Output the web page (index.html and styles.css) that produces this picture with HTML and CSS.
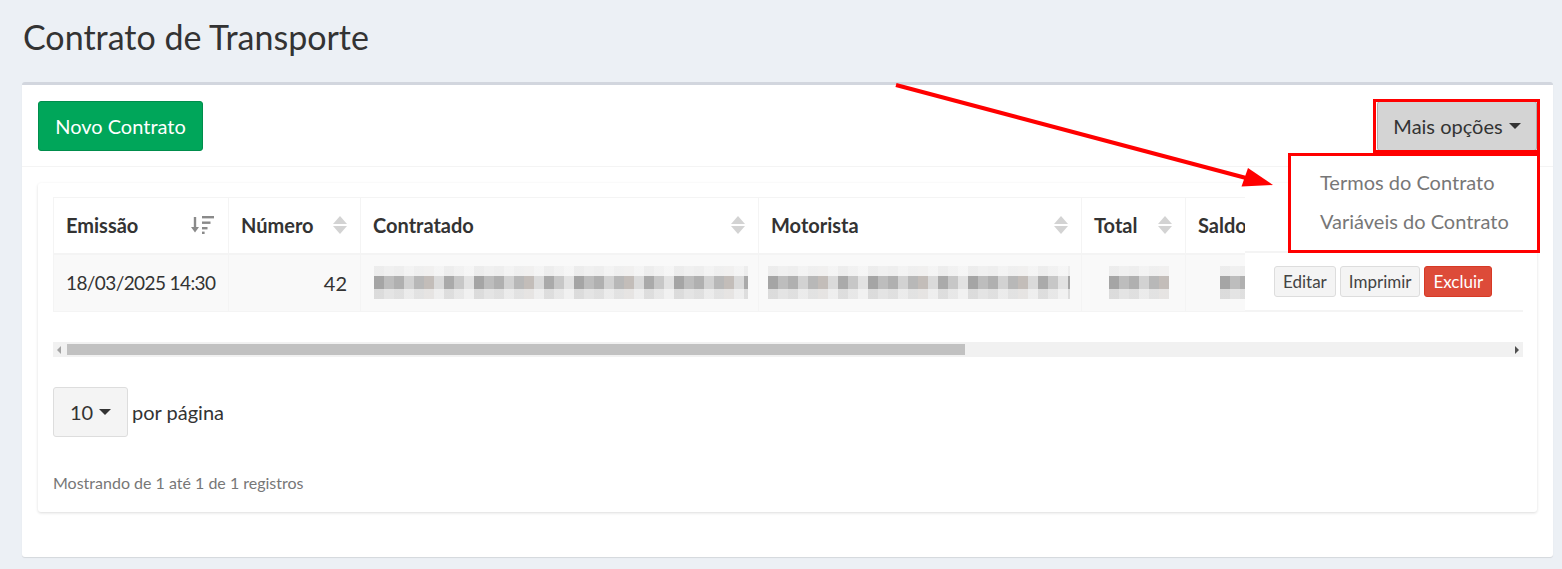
FILE: index.html
```html
<!DOCTYPE html>
<html lang="pt-BR">
<head>
<meta charset="utf-8">
<title>Contrato de Transporte</title>
<link rel="stylesheet" href="styles.css">
</head>
<body>
<div class="page">
  <h1 class="title">Contrato de Transporte</h1>
  <section class="box">
    <div class="box-header">
      <button class="btn btn-success">Novo Contrato</button>
      <div class="dropdown">
        <button class="btn btn-more">Mais opções <span class="caret"></span></button>
        <span class="annot annot-btn"></span>
        <ul class="dropdown-menu">
          <li>Termos do Contrato</li>
          <li>Variáveis do Contrato</li>
        </ul>
      </div>
    </div>
    <div class="box-body">
      <div class="card">
        <div class="table-wrap">
          <table class="grid">
            <colgroup>
              <col class="c-emissao"><col class="c-numero"><col class="c-contratado"><col class="c-motorista"><col class="c-total"><col class="c-saldo"><col class="c-rest">
            </colgroup>
            <thead>
              <tr>
                <th><div class="th-in"><span>Emissão</span>
                  <svg class="sort-active" width="24" height="18" viewBox="0 0 24 18"><path d="M4 1v13" stroke="#8a8a8a" stroke-width="2.4" fill="none"/><path d="M0 11l4 5.5 4-5.5z" fill="#8a8a8a"/><rect x="11" y="0" width="12" height="2.4" fill="#8a8a8a"/><rect x="11" y="5.5" width="8.5" height="2.4" fill="#8a8a8a"/><rect x="11" y="11" width="5.5" height="2.4" fill="#8a8a8a"/><rect x="11" y="15.6" width="2.6" height="2.4" fill="#8a8a8a"/></svg>
                </div></th>
                <th><div class="th-in"><span>Número</span><span class="sort"></span></div></th>
                <th><div class="th-in"><span>Contratado</span><span class="sort"></span></div></th>
                <th><div class="th-in"><span>Motorista</span><span class="sort"></span></div></th>
                <th><div class="th-in"><span>Total</span><span class="sort"></span></div></th>
                <th><div class="th-in"><span>Saldo</span><span class="sort"></span></div></th>
                <th></th>
              </tr>
            </thead>
            <tbody>
              <tr>
                <td class="date">18/03/2025 14:30</td>
                <td class="num">42</td>
                <td><div class="blur blur-long"></div></td>
                <td><div class="blur blur-mot"></div></td>
                <td><div class="blur blur-short"></div></td>
                <td><div class="blur blur-tiny"></div></td>
                <td></td>
              </tr>
            </tbody>
          </table>
          <div class="fixed-col">
            <div class="fixed-head"></div>
            <div class="fixed-cell">
              <button class="btn-sm">Editar</button>
              <button class="btn-sm">Imprimir</button>
              <button class="btn-sm btn-danger">Excluir</button>
            </div>
          </div>
        </div>
        <div class="hscroll">
          <span class="arr arr-l"></span>
          <div class="thumb"></div>
          <span class="arr arr-r"></span>
        </div>
        <div class="length">
          <button class="btn-len">10 <span class="caret"></span></button>
          <span class="len-label">por página</span>
        </div>
        <p class="info">Mostrando de 1 até 1 de 1 registros</p>
      </div>
    </div>
  </section>
</div>
<svg class="arrow" width="1562" height="569" viewBox="0 0 1562 569">
  <line x1="896" y1="85" x2="1248" y2="178.5" stroke="#ff0000" stroke-width="4.2"/>
  <polygon points="1273,185 1241.5,186.5 1248,168" fill="#ff0000"/>
</svg>
</body>
</html>
```

FILE: styles.css
```css
* { box-sizing: border-box; }

html, body {
  margin: 0;
  background: #ecf0f5;
  font-family: Lato, "Source Sans Pro", "Noto Sans", sans-serif;
  color: #333;
}

.page {
  padding: 15px 9px 12px 22px;
}

.title {
  margin: 0 0 23px 1px;
  font-size: 34px;
  line-height: 44px;
  font-weight: 400;
  color: #333;
}

.box {
  background: #fff;
  border-top: 3px solid #d2d6de;
  border-radius: 3px;
  box-shadow: 0 1px 1px rgba(0, 0, 0, 0.1);
}

.box-header {
  display: flex;
  justify-content: space-between;
  align-items: center;
  padding: 16px 16px 15px;
  border-bottom: 1px solid #f4f4f4;
}

.btn {
  font-family: inherit;
  font-size: 20px;
  height: 50px;
  border-radius: 3px;
  cursor: pointer;
}

.btn-success {
  width: 165px;
  background: #00a65a;
  border: 1px solid #008d4c;
  color: #fff;
}

.dropdown {
  position: relative;
}

.btn-more {
  width: 160px;
  background: #d4d4d4;
  border: 1px solid #adadad;
  color: #333;
  display: flex;
  align-items: center;
  justify-content: center;
  gap: 6px;
}

.caret {
  display: inline-block;
  width: 0;
  height: 0;
  border-left: 6px solid transparent;
  border-right: 6px solid transparent;
  border-top: 6px solid #333;
}

.annot-btn {
  position: absolute;
  left: -4px;
  top: -2px;
  right: -3px;
  bottom: -2px;
  border: 3px solid #ff0000;
  pointer-events: none;
}

.dropdown-menu {
  position: absolute;
  right: -3px;
  top: 52px;
  width: 252px;
  height: 100px;
  margin: 0;
  padding: 7px 0 0 29px;
  list-style: none;
  background: #fff;
  border: 3px solid #ff0000;
  z-index: 5;
}

.dropdown-menu li {
  font-size: 20px;
  line-height: 39px;
  color: #777;
}

.box-body {
  padding: 16px 16px 45px;
}

.card {
  border-radius: 3px;
  box-shadow: 0 1px 3px rgba(0, 0, 0, 0.14);
  padding: 14px 14px 20px 15px;
}

.table-wrap {
  position: relative;
  overflow: hidden;
}

.grid {
  border-collapse: collapse;
  table-layout: fixed;
  width: 1620px;
  border: 1px solid #f4f4f4;
}

.c-emissao { width: 175px; }
.c-numero { width: 132px; }
.c-contratado { width: 398px; }
.c-motorista { width: 323px; }
.c-total { width: 104px; }
.c-saldo { width: 200px; }
.c-rest { width: 288px; }

.grid th {
  height: 56px;
  padding: 0 13px 0 12px;
  text-align: left;
  font-size: 20px;
  font-weight: 700;
  color: #333;
  border-right: 1px solid #f4f4f4;
  border-bottom: 2px solid #f4f4f4;
  white-space: nowrap;
}

.th-in {
  display: flex;
  align-items: center;
  justify-content: space-between;
}

.sort {
  display: flex;
  flex-direction: column;
  gap: 2px;
  width: 14px;
}

.sort::before,
.sort::after {
  content: "";
  width: 0;
  height: 0;
  border-left: 7px solid transparent;
  border-right: 7px solid transparent;
}

.sort::before { border-bottom: 8px solid #d3d3d3; }
.sort::after { border-top: 8px solid #d3d3d3; }

.grid td {
  height: 58px;
  padding: 0 13px 0 12px;
  font-size: 20px;
  background: #f9f9f9;
  border-right: 1px solid #f4f4f4;
  border-bottom: 1px solid #f4f4f4;
  white-space: nowrap;
}

.grid td.date {
  font-size: 19px;
  letter-spacing: -0.6px;
}

.grid td.num { text-align: right; }

.blur {
  height: 33px;
  background-image:
    linear-gradient(180deg, rgba(249,249,249,0.85) 0 10px, rgba(249,249,249,0) 10px 23px, rgba(249,249,249,0.65) 23px 33px),
    repeating-linear-gradient(90deg, #a5a5a5 0 10px, #bdbdbd 10px 20px, #b0b0b0 20px 30px, #d2d2d2 30px 40px, #b8b8b8 40px 50px, #c3bdb9 50px 60px, #dadada 60px 70px, #aaaaaa 70px 80px, #c7c7c7 80px 90px, #e2e2e2 90px 100px);
}

.blur-long { width: 374px; margin-left: 1px; }
.blur-mot { width: 302px; margin-left: -3px; }
.blur-short { width: 60px; margin-left: 15px; }
.blur-tiny { width: 30px; margin-left: 22px; }

.fixed-col {
  position: absolute;
  top: 0;
  right: 0;
  width: 278px;
  background: #fff;
}

.fixed-head {
  height: 56px;
  border-bottom: 2px solid #f4f4f4;
}

.fixed-cell {
  height: 58px;
  display: flex;
  align-items: center;
  gap: 4px;
  padding-left: 29px;
  border-bottom: 1px solid #f4f4f4;
}

.btn-sm {
  height: 31px;
  padding: 0 8px;
  font-family: inherit;
  font-size: 17px;
  background: #f4f4f4;
  border: 1px solid #ddd;
  border-radius: 3px;
  color: #444;
}

.btn-danger {
  background: #dd4b39;
  border-color: #d73925;
  color: #fff;
}

.hscroll {
  margin-top: 30px;
  height: 15px;
  background: #f1f1f1;
  display: flex;
  align-items: center;
  justify-content: space-between;
  padding: 0 4px;
}

.thumb {
  flex: 0 0 898px;
  height: 11px;
  background: #c1c1c1;
  margin-right: auto;
  margin-left: 6px;
}

.arr {
  width: 0;
  height: 0;
  border-top: 4px solid transparent;
  border-bottom: 4px solid transparent;
}

.arr-l { border-right: 4px solid #a3a3a3; }
.arr-r { border-left: 4px solid #505050; }

.length {
  margin-top: 30px;
  display: flex;
  align-items: center;
  gap: 4px;
}

.btn-len {
  width: 75px;
  height: 50px;
  font-family: inherit;
  font-size: 20px;
  color: #333;
  background: #f4f4f4;
  border: 1px solid #ddd;
  border-radius: 3px;
  display: flex;
  align-items: center;
  justify-content: center;
  gap: 6px;
}

.len-label {
  font-size: 20px;
  color: #333;
}

.info {
  margin: 36px 0 0;
  font-size: 16px;
  color: #777;
}

.arrow {
  position: absolute;
  left: 0;
  top: 0;
  pointer-events: none;
}
```
